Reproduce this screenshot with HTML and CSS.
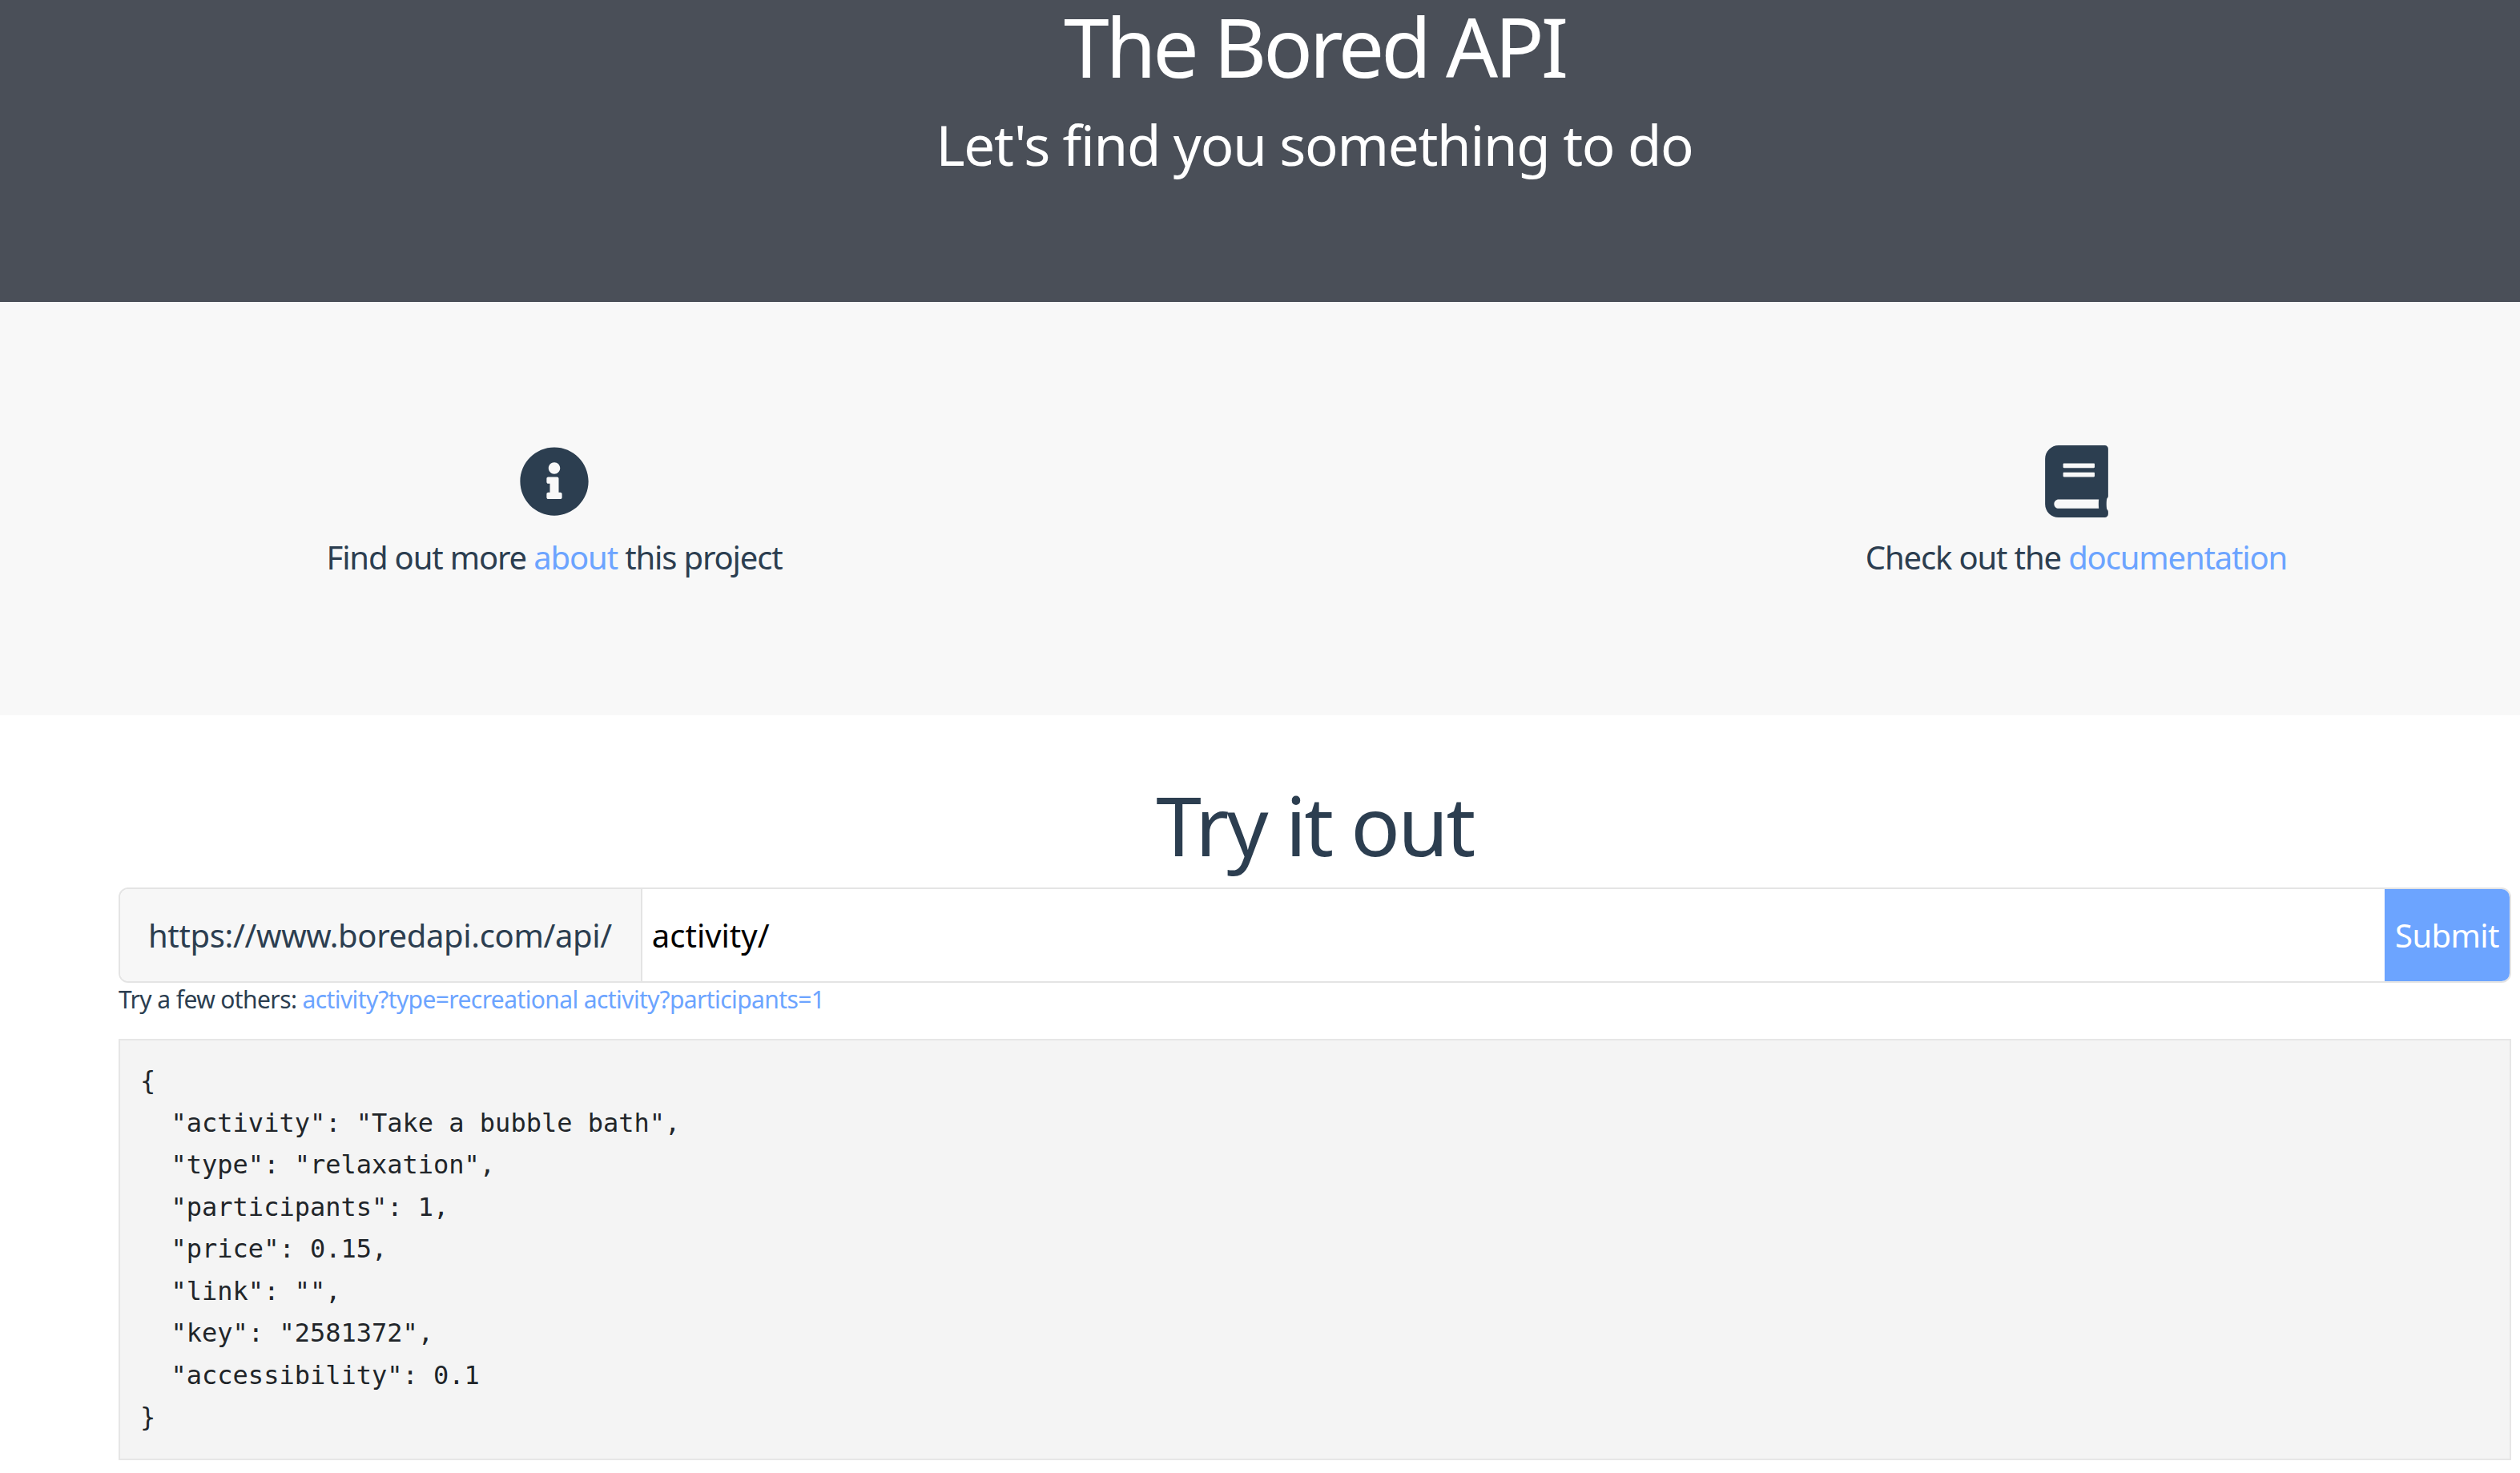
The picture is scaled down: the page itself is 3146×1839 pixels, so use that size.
FILE: index.html
```html
<!DOCTYPE html>
<html lang="en">
<head>
<meta charset="utf-8">
<title>The Bored API</title>
<link rel="stylesheet" href="styles.css">
</head>
<body>
<div class="page">
  <header class="hero">
    <h1 class="hero-title">The Bored API</h1>
    <p class="hero-sub">Let's find you something to do</p>
  </header>
  <section class="features">
    <div class="feature">
      <svg class="icon" viewBox="0 0 512 512"><path d="M256 8C119.043 8 8 119.083 8 256c0 136.997 111.043 248 248 248s248-111.003 248-248C504 119.083 392.957 8 256 8zm0 110c23.196 0 42 18.804 42 42s-18.804 42-42 42-42-18.804-42-42 18.804-42 42-42zm56 254c0 6.627-5.373 12-12 12h-88c-6.627 0-12-5.373-12-12v-24c0-6.627 5.373-12 12-12h12v-64h-12c-6.627 0-12-5.373-12-12v-24c0-6.627 5.373-12 12-12h64c6.627 0 12 5.373 12 12v100h12c6.627 0 12 5.373 12 12v24z"/></svg>
      <p class="feature-text">Find out more <a href="#">about</a> this project</p>
    </div>
    <div class="feature">
      <svg class="icon icon-book" viewBox="0 0 448 512"><path d="M448 360V24c0-13.3-10.7-24-24-24H96C43 0 0 43 0 96v320c0 53 43 96 96 96h328c13.3 0 24-10.7 24-24v-16c0-7.5-3.5-14.3-8.9-18.7-4.2-15.4-4.2-59.3 0-74.7 5.4-4.3 8.9-11.1 8.9-18.6zM128 134c0-3.3 2.7-6 6-6h212c3.3 0 6 2.7 6 6v20c0 3.3-2.7 6-6 6H134c-3.3 0-6-2.7-6-6v-20zm0 64c0-3.3 2.7-6 6-6h212c3.3 0 6 2.7 6 6v20c0 3.3-2.7 6-6 6H134c-3.3 0-6-2.7-6-6v-20zm253.4 250H96c-17.7 0-32-14.3-32-32 0-17.6 14.4-32 32-32h285.4c-1.9 17.1-1.9 46.9 0 64z"/></svg>
      <p class="feature-text">Check out the <a href="#">documentation</a></p>
    </div>
  </section>
  <main class="try">
    <h2 class="try-title">Try it out</h2>
    <div class="input-group">
      <span class="addon">https://www.boredapi.com/api/</span>
      <span class="field">activity/</span>
      <span class="submit">Submit</span>
    </div>
    <p class="others">Try a few others: <a href="#">activity?type=recreational</a> <a href="#">activity?participants=1</a></p>
    <pre class="result">{
  "activity": "Take a bubble bath",
  "type": "relaxation",
  "participants": 1,
  "price": 0.15,
  "link": "",
  "key": "2581372",
  "accessibility": 0.1
}</pre>
  </main>
</div>
</body>
</html>
```
FILE: styles.css
```css
html, body {
  margin: 0;
  padding: 0;
  background: #fff;
  overflow: hidden;
}
.page {
  width: 3282px;
  font-family: "Noto Sans", "Open Sans", sans-serif;
  font-weight: 400;
  color: #2c3e50;
}
a {
  color: #6ca4ff;
  text-decoration: none;
}
.hero {
  height: 377px;
  box-sizing: border-box;
  background: #4a4f58;
  color: #fff;
  text-align: center;
}
.hero-title {
  margin: 0;
  font-size: 102px;
  font-weight: 400;
  line-height: 116px;
  letter-spacing: -4.15px;
}
.hero-sub {
  margin: 0;
  padding-top: 4px;
  font-size: 69px;
  line-height: 120px;
  letter-spacing: -1.27px;
}
.features {
  height: 516px;
  box-sizing: border-box;
  background: #f8f8f8;
  padding: 179px 0 0 2px;
  display: flex;
  justify-content: center;
  gap: 1300px;
}
.feature {
  width: 600px;
  display: flex;
  flex-direction: column;
  align-items: center;
}
.icon {
  width: 88px;
  height: 90px;
  fill: #2c3e50;
  display: block;
}
.icon-book {
  width: 79px;
}
.feature-text {
  margin: 20px 0 0;
  font-size: 40px;
  line-height: 60px;
  letter-spacing: -1.15px;
}
.try {
  margin: 0 147px 0 148px;
}
.try-title {
  margin: 0;
  padding-top: 72px;
  height: 215px;
  box-sizing: border-box;
  text-align: center;
  font-size: 102px;
  line-height: 130px;
  font-weight: 400;
  letter-spacing: -2.7px;
}
.input-group {
  display: flex;
  height: 119px;
  box-sizing: border-box;
  border: 2px solid #e4e4e4;
  border-radius: 12px;
  overflow: hidden;
  font-size: 40px;
  line-height: 115px;
}
.addon {
  background: #f7f7f7;
  padding: 0 36px 0 35px;
  border-right: 2px solid #e4e4e4;
  letter-spacing: -0.35px;
}
.field {
  flex: 1;
  padding: 0 12px;
  color: #000;
}
.submit {
  width: 156px;
  text-align: center;
  background: #6ca4ff;
  color: #fff;
  letter-spacing: -0.6px;
}
.others {
  margin: 0;
  height: 70px;
  font-size: 30px;
  line-height: 42px;
  letter-spacing: -0.6px;
}
.result {
  margin: 0;
  box-sizing: border-box;
  height: 526px;
  padding: 24px 26px 0 25px;
  background: #f4f4f4;
  border: 2px solid #e6e6e6;
  font-family: "DejaVu Sans Mono", monospace;
  font-size: 32px;
  line-height: 52.5px;
  color: #212529;
}
```
